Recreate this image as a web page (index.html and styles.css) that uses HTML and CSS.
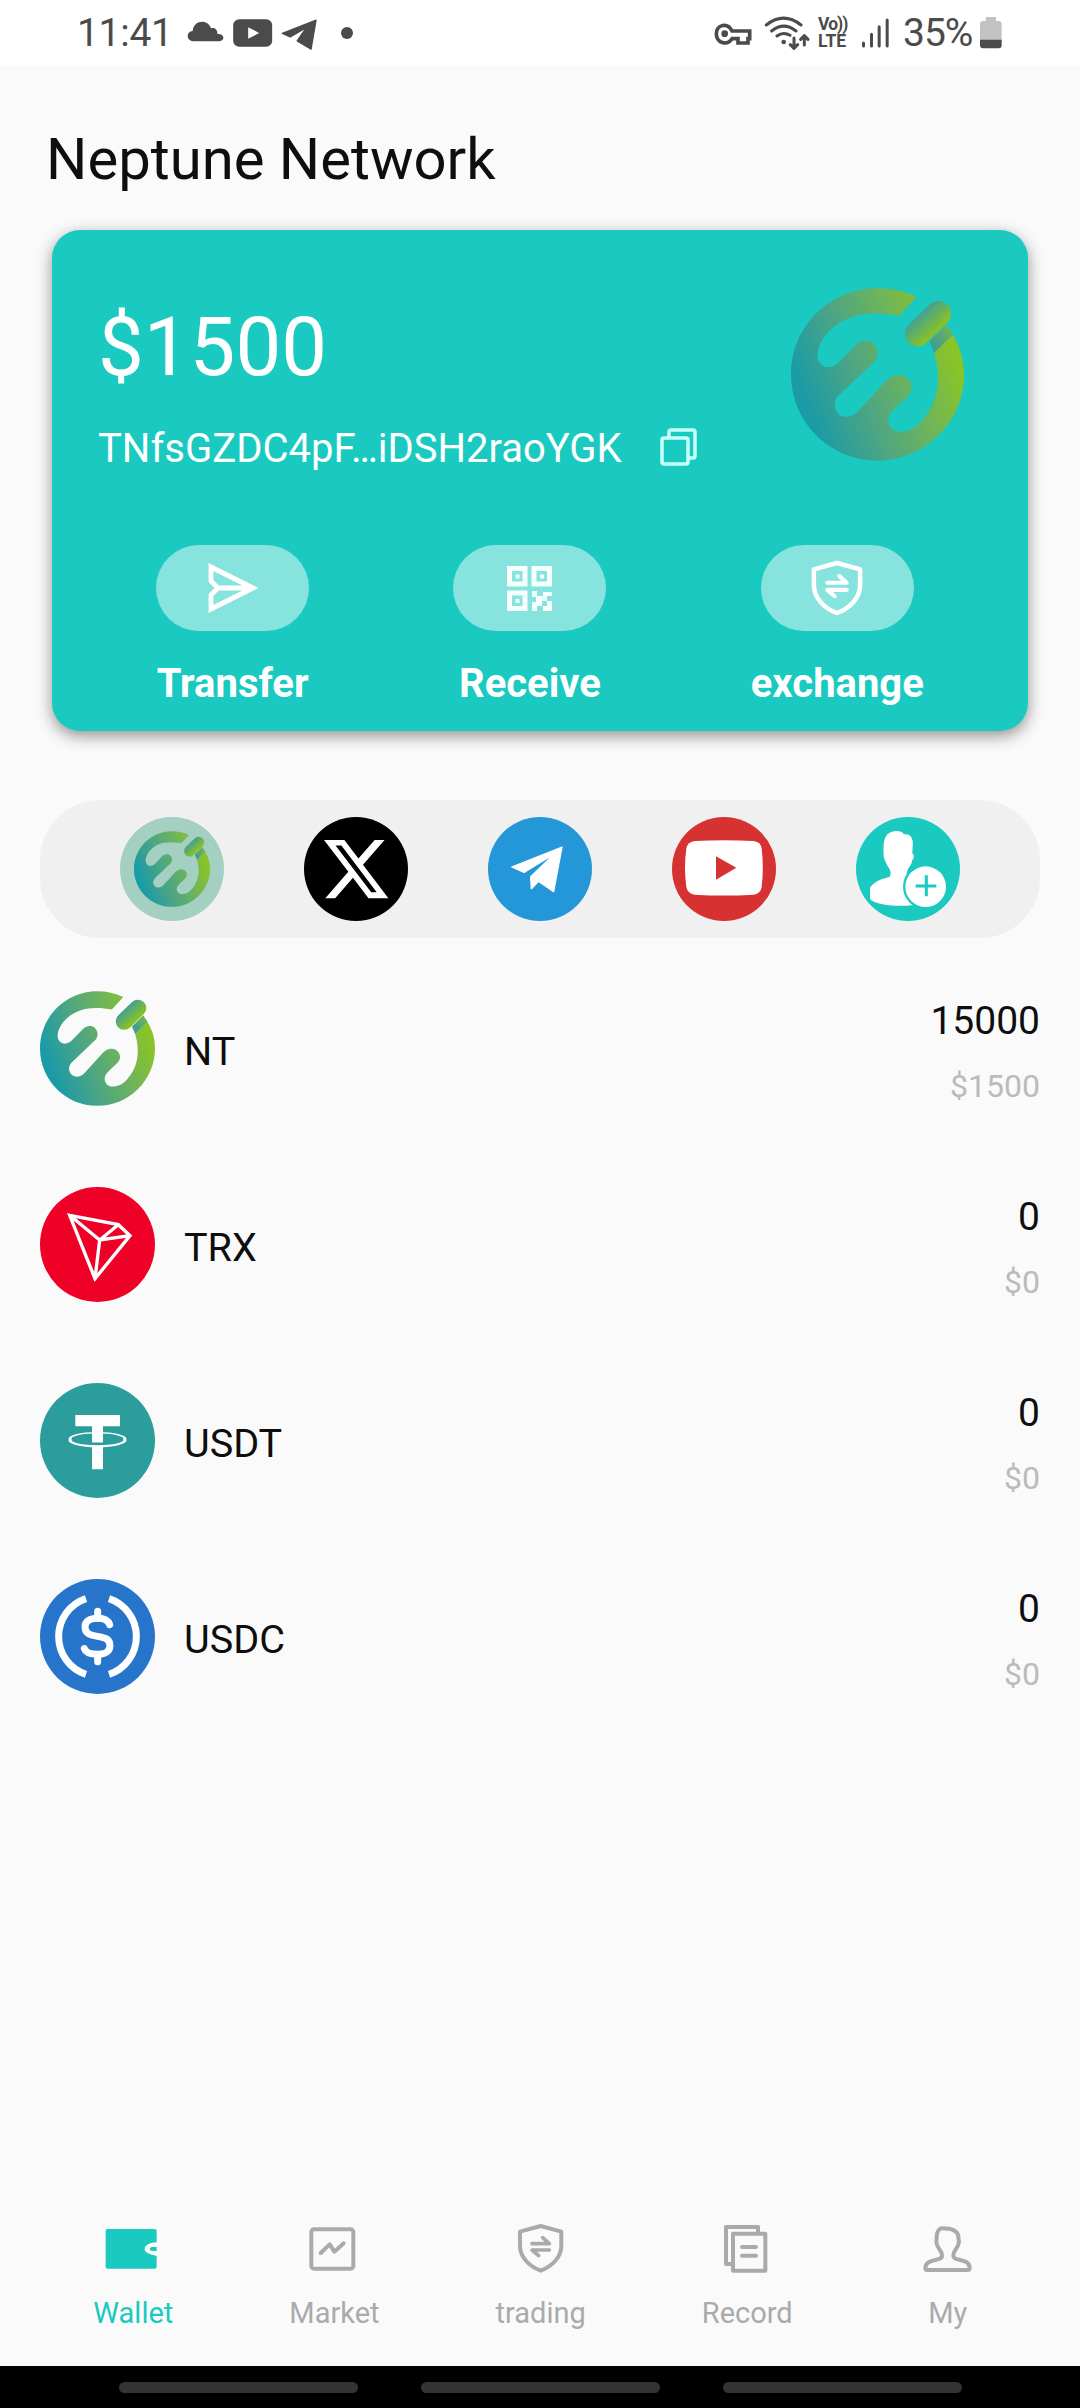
FILE: index.html
```html
<!DOCTYPE html>
<html lang="en">
<head>
<meta charset="utf-8">
<title>Neptune Network</title>
<link rel="stylesheet" href="styles.css">
</head>
<body>
<svg class="defs" aria-hidden="true">
  <defs>
    <linearGradient id="ring" gradientUnits="userSpaceOnUse" x1="110" y1="400" x2="550" y2="240">
      <stop offset="0" stop-color="#1b9ba6"/><stop offset=".35" stop-color="#4ca584"/><stop offset=".7" stop-color="#70b55a"/><stop offset="1" stop-color="#8ac426"/>
    </linearGradient>
    <linearGradient id="plug" gradientUnits="userSpaceOnUse" x1="445" y1="130" x2="500" y2="188">
      <stop offset="0" stop-color="#3f9f98"/><stop offset=".9" stop-color="#86c02b"/>
    </linearGradient>
    <linearGradient id="neck" gradientUnits="userSpaceOnUse" x1="490" y1="220" x2="550" y2="180">
      <stop offset="0" stop-color="#3f9f90"/><stop offset="1" stop-color="#77b54c"/>
    </linearGradient>
    <symbol id="logo" viewBox="63 54 519 517">
      <path fill="url(#ring)" d="M439 80C402 62 364 54 322 54C179 54 63 170 63 312C63 455 179 571 322 571C465 571 582 455 582 312C582 269 570 229 548 193L492 246C510 305 512 373 472 431C452 460 430 484 392 484C362 484 348 456 358 434C366 419 398 392 413 377C430 360 427 334 409 321C389 308 365 314 348 331L263 424C247 441 220 446 204 429C190 413 191 390 207 374L309 278C326 262 328 238 311 220C296 206 273 209 257 224L205 278C189 294 165 295 151 280C138 265 142 244 149 226C166 181 214 145 266 134C309 126 350 129 387 137Z"/>
      <path fill="url(#neck)" d="M478 213L529 163L549 193L492 247Z"/>
      <path stroke="url(#plug)" stroke-width="76" stroke-linecap="round" d="M443 190L505 130"/>
    </symbol>
    <symbol id="shield" viewBox="-13 70 144 150">
      <path fill="none" stroke="currentColor" stroke-width="12" stroke-linejoin="round" d="M59 78L121 95V137C121 171 94 199 59 212C24 199-3 171-3 137V95Z"/>
      <path fill="none" stroke="currentColor" stroke-width="11" stroke-linecap="round" stroke-linejoin="round" d="M33 131H85L65 113M85 150H33L53 167"/>
    </symbol>
  </defs>
</svg>

<header class="status">
  <div class="status-side">
    <span class="clock">11:41</span>
    <svg class="s-cloud" viewBox="380 40 112 120"><path fill="#4b4b4b" d="M399 122C376 120 378 92 397 91C400 58 442 53 453 83C466 79 473 90 472 100C494 98 497 122 476 122Z"/></svg>
    <svg class="s-tube" viewBox="516 40 122 120"><rect x="519" y="56" width="117" height="82" rx="18" fill="#4b4b4b"/><path fill="#fff" d="M564 80L597 97L564 114Z"/></svg>
    <svg class="s-plane" viewBox="663 40 112 120"><path fill="#4b4b4b" stroke="#4b4b4b" stroke-width="4" stroke-linejoin="round" d="M667 98L769 58L754 146L712 121L740 80L691 109Z"/></svg>
    <span class="s-dot"></span>
  </div>
  <div class="status-side">
    <svg class="s-key" viewBox="42 40 114 120"><path fill="none" stroke="#4b4b4b" stroke-width="11" d="M96 91H149V114H144V127H114V114H96C80 138 49 125 49 99C49 73 83 63 96 91Z"/><circle cx="74" cy="99" r="10" fill="#4b4b4b"/></svg>
    <svg class="s-wifi" viewBox="192 40 138 120"><g fill="none" stroke="#4b4b4b" stroke-width="9" stroke-linecap="round" stroke-linejoin="round"><path d="M199 73Q251 32 303 73M215 91Q251 62 288 91M231 106Q250 92 270 104M282 112V142M271 132L282 143L293 132M313 133V107M302 116L313 105L324 116"/></g><circle cx="251" cy="124" r="7" fill="#4b4b4b"/></svg>
    <div class="volte"><span class="vo">Vo))</span><span>LTE</span></div>
    <svg class="s-signal" viewBox="484 40 86 120"><path stroke="#4b4b4b" stroke-width="9" stroke-linecap="round" d="M491 127V136M515 101V136M538 78V136M562 58V136"/></svg>
    <span class="battery-text">35%</span>
    <svg class="s-battery" viewBox="845 40 66 120"><path fill="#c2c2c2" d="M862 52Q862 49 865 49H890Q893 49 893 52V61H901Q910 61 910 70V118H845V70Q845 61 854 61H862Z"/><path fill="#4b4b4b" d="M845 117H910V134Q910 143 901 143H854Q845 143 845 134Z"/></svg>
  </div>
</header>

<main class="page">
  <h1 class="title">Neptune Network</h1>

  <section class="card">
    <div class="card-top">
      <div>
        <div class="balance">$1500</div>
        <div class="address">
          <span>TNfsGZDC4pF…iDSH2raoYGK</span>
          <svg class="copy" viewBox="0 0 38 38"><g fill="none" stroke="#c9fffa" stroke-width="3.500" stroke-linejoin="round"><rect x="2" y="10" width="26" height="26" rx="2"/><path d="M9 10V4Q9 2 11 2H33Q35 2 35 4V28Q35 30 33 30H28"/></g></svg>
        </div>
      </div>
      <svg class="card-logo"><use href="#logo"/></svg>
    </div>
    <div class="actions">
      <div class="action">
        <span class="pill"><svg class="i-send" viewBox="0 0 50 52"><path fill="none" stroke="#fff" stroke-width="4.800" stroke-linejoin="miter" d="M3 5L45 26L3 47V33L10 26L3 19ZM10 26H43"/></svg></span>
        <span class="action-label">Transfer</span>
      </div>
      <div class="action">
        <span class="pill"><svg class="i-qr" viewBox="0 0 45 45"><g fill="none" stroke="#f4fffe" stroke-width="5"><path d="M2.500 2.500H18V18H2.500ZM27 2.500H42.500V18H27ZM2.500 27H18V42.500H2.500Z"/></g><path fill="#f4fffe" d="M8.500 8.500h4v4h-4ZM33 8.500h4v4h-4ZM8.500 33h4v4h-4ZM25 25h5v5h6v-4h9v4h-5v5h-5v5h-5v5h-5v-9h4v-5h-4ZM40 35h5v10h-9v-5h4Z"/></svg></span>
        <span class="action-label">Receive</span>
      </div>
      <div class="action">
        <span class="pill"><svg class="i-shield"><use href="#shield"/></svg></span>
        <span class="action-label">exchange</span>
      </div>
    </div>
  </section>

  <nav class="socials">
    <a class="social site"><svg class="site-logo"><use href="#logo"/></svg></a>
    <a class="social x"><svg viewBox="822 80 312 312"><path fill="#fff" transform="translate(870.8 128.900) scale(8.950)" d="M18.244 2.250h3.308l-7.227 8.260 8.502 11.240H16.170l-5.214-6.817L4.990 21.750H1.680l7.730-8.835L1.254 2.250H8.080l4.713 6.231zm-1.161 17.520h1.833L7.084 4.126H5.117z"/></svg></a>
    <a class="social telegram"><svg viewBox="-126 80 312 312"><path fill="#fff" stroke="#fff" stroke-width="4" stroke-linejoin="round" d="M-55 230L96 170L71 304L26 273L4 295L2 259L73 191L-18 246Z"/></svg></a>
    <a class="social youtube"><svg viewBox="426 80 312 312"><path fill="#fff" d="M495 152Q582 147 670 152Q692 154 695 175Q702 232 695 290Q692 311 670 313Q582 318 495 313Q473 311 469 290Q461 232 469 175Q473 154 495 152Z"/><path fill="#d63232" d="M558 198L619 232L558 268Z"/></svg></a>
    <a class="social invite"><svg viewBox="978 80 312 312"><path fill="#fff" d="M1099 122C1112 122 1119 126 1122 132C1144 128 1151 148 1148 170L1147 190C1155 192 1151 207 1146 211C1145 224 1137 228 1133 239C1128 250 1128 262 1145 268L1160 344C1110 349 1040 347 1020 326V292C1034 272 1057 265 1078 260C1087 248 1079 236 1071 224C1067 212 1059 204 1061 192C1060 165 1058 122 1099 122Z"/><circle cx="1187" cy="289" r="68" fill="#1ac9bf"/><circle cx="1187" cy="289" r="61" fill="#fff"/><path stroke="#1ac9bf" stroke-width="9" d="M1157 287H1219M1189 255V318"/></svg></a>
  </nav>

  <section class="tokens">
    <div class="token">
      <svg class="coin"><use href="#logo"/></svg>
      <span class="symbol">NT</span>
      <div class="amounts"><span class="amount">15000</span><span class="value">$1500</span></div>
    </div>
    <div class="token">
      <svg class="coin" viewBox="30 651 345 345"><circle cx="202.500" cy="823.500" r="172.500" fill="#ef0027"/><path fill="none" stroke="#fff" stroke-width="10" d="M119 736L265 764L300 797L195 926ZM119 736L209 810L300 797M265 764L209 810L195 926"/></svg>
      <span class="symbol">TRX</span>
      <div class="amounts"><span class="amount">0</span><span class="value">$0</span></div>
    </div>
    <div class="token">
      <svg class="coin" viewBox="30 69 345 345"><circle cx="202.500" cy="241.500" r="172.500" fill="#2a9d9c"/><path fill="#fff" d="M136 165H270V199H219V247H186V199H136ZM186 258H219V328H186Z"/><path fill="#fff" fill-rule="evenodd" d="M116 239A87 21 0 1 0 289 239A87 21 0 1 0 116 239ZM125 238A78 16 0 1 0 280 238A78 16 0 1 0 125 238Z"/><path fill="#fff" d="M186 205H219V247H186Z"/></svg>
      <span class="symbol">USDT</span>
      <div class="amounts"><span class="amount">0</span><span class="value">$0</span></div>
    </div>
    <div class="token">
      <svg class="coin" viewBox="30 657 345 345"><circle cx="202.500" cy="829.500" r="172.500" fill="#2775ca"/><g fill="none" stroke="#fff" stroke-width="21"><path d="M168 716A119.500 119.500 0 0 0 168 943M237 716A119.500 119.500 0 0 1 237 943"/><path stroke-linecap="round" d="M203 754V775M203 884V905"/><path stroke-linecap="round" d="M239 794C234 778 221 775 203 775C180 775 165 784 165 801C165 845 240 813 240 857C240 874 225 883 203 883C182 883 167 878 163 866"/></g></svg>
      <span class="symbol">USDC</span>
      <div class="amounts"><span class="amount">0</span><span class="value">$0</span></div>
    </div>
  </section>
</main>

<nav class="tabs">
  <a class="tab active"><svg viewBox="103 54 234 180"><path fill="#1ac9bf" d="M144 87H285Q291 87 291 93V127C270 127 255 136 255 147C255 158 270 163 291 168V200Q291 206 285 206H144Q138 206 138 200V93Q138 87 144 87Z"/><path fill="#1ac9bf" d="M278 141H291V153H278Q270 153 270 147Q270 141 278 141Z"/></svg><span>Wallet</span></a>
  <a class="tab"><svg viewBox="706 54 234 180"><g fill="none" stroke="#aaa" stroke-width="12" stroke-linejoin="round" stroke-linecap="round"><rect x="755" y="88" width="126" height="118" rx="8"/><path d="M783 159L810 133L824 155L852 130"/></g></svg><span>Market</span></a>
  <a class="tab"><svg viewBox="-57 54 234 180"><use href="#shield" x="-13" y="70" width="144" height="150"/></svg><span>trading</span></a>
  <a class="tab"><svg viewBox="567 54 234 180"><g fill="none" stroke="#aaa" stroke-width="12" stroke-linejoin="round" stroke-linecap="round"><path d="M717 96V81H621V192H637"/><rect x="642" y="101" width="97" height="111"/><path d="M669 141H711M669 167H711"/></g></svg><span>Record</span></a>
  <a class="tab"><svg viewBox="1167 54 234 180"><path fill="none" stroke="#aaa" stroke-width="12" stroke-linejoin="round" d="M1262 85C1296 84 1316 93 1315 112L1317 126C1315 146 1299 151 1300 166C1299 187 1350 172 1349 205Q1349 210 1343 210H1222Q1216 210 1216 205C1216 172 1268 187 1266 166C1267 151 1250 146 1249 126L1250 112C1250 99 1254 90 1262 85Z"/></svg><span>My</span></a>
</nav>

<footer class="sysnav"><i></i><i></i><i></i></footer>
</body>
</html>
```
FILE: styles.css
```css
* { box-sizing: border-box; }

body {
  margin: 0;
  width: 1080px;
  height: 2408px;
  display: flex;
  flex-direction: column;
  background: #fafafa;
  color: #0e0e0e;
  font-family: Roboto, "Liberation Sans", sans-serif;
}

svg { display: block; flex: none; }
.defs { width: 0; height: 0; position: absolute; }

/* Status bar */
.status {
  flex: none;
  height: 65px;
  padding: 0 78px 0 77px;
  display: flex;
  justify-content: space-between;
  background: #fff;
  color: #4b4b4b;
}
.status-side { display: flex; align-items: center; height: 65px; }
.status-side svg { height: 40px; margin-top: 2px; }
.clock { width: 95px; font-size: 39px; letter-spacing: -0.3px; }
.s-cloud { width: 37px; margin-left: 15px; }
.s-tube { width: 41px; margin-left: 8px; }
.s-plane { width: 37px; margin-left: 8px; }
.s-dot { width: 12px; height: 12px; margin-left: 23px; border-radius: 50%; background: #4b4b4b; }
.s-key { width: 38px; }
.s-wifi { width: 46px; margin-left: 12px; }
.volte {
  width: 31px;
  margin: 1px 0 0 8px;
  display: flex;
  flex-direction: column;
  font-size: 17.5px;
  line-height: 17px;
  font-weight: 700;
  white-space: nowrap;
}
.vo { letter-spacing: -0.9px; }
.s-signal { width: 29px; margin-left: 12px; }
.battery-text { width: 71px; margin: 0 6px 0 13px; font-size: 39px; letter-spacing: -1px; }
.s-battery { width: 22px; }

/* Page */
.page { flex: 1; padding: 0 40px; }
.title {
  margin: 60px 0 36px;
  padding-left: 6px;
  font-size: 58px;
  line-height: 69px;
  font-weight: 400;
}

/* Balance card */
.card {
  height: 501px;
  margin: 0 12px;
  padding: 58px 32px 0;
  border-radius: 28px;
  background: #1ac9bf;
  box-shadow: 0 5px 16px rgba(0, 0, 0, .42);
  color: #fff;
}
.card-top {
  display: flex;
  justify-content: space-between;
  height: 257px;
  padding: 0 32px 0 14px;
}
.balance { margin-top: 11px; font-size: 81.5px; line-height: 96px; }
.address {
  display: flex;
  align-items: center;
  gap: 38px;
  margin-top: 30px;
  font-size: 40px;
  line-height: 48px;
}
.copy { width: 38px; height: 38px; margin-bottom: 4px; }
.card-logo { width: 173px; height: 173px; }
.actions { display: flex; justify-content: space-around; }
.action { display: flex; flex-direction: column; align-items: center; }
.pill {
  width: 153px;
  height: 86px;
  display: flex;
  align-items: center;
  justify-content: center;
  border-radius: 43px;
  background: rgba(255, 255, 255, .48);
}
.action-label { margin-top: 29px; font-size: 40px; line-height: 48px; font-weight: 700; }
.i-send { width: 50px; height: 52px; }
.i-qr { width: 45px; height: 45px; }
.i-shield { width: 54px; height: 56px; }

/* Social links */
.socials {
  height: 138px;
  margin-top: 69px;
  display: flex;
  align-items: center;
  justify-content: space-evenly;
  border-radius: 60px;
  background: #f0f0f0;
}
.social {
  width: 104px;
  height: 104px;
  display: flex;
  align-items: center;
  justify-content: center;
  border-radius: 50%;
}
.social svg { width: 104px; height: 104px; }
.social .site-logo { width: 76px; height: 76px; }
.site { background: #a3d0c0; }
.x { background: #000; }
.telegram { background: #2397d8; }
.youtube { background: #d63232; }
.invite { background: #1ac9bf; }

/* Token list */
.tokens { margin-top: 53px; display: grid; gap: 81px; }
.token { height: 115px; display: flex; align-items: center; }
.coin { width: 115px; height: 115px; }
.symbol { margin: 6px 0 0 29px; font-size: 39.6px; line-height: 48px; }
.amounts {
  margin: 6px 0 0 auto;
  display: flex;
  flex-direction: column;
  align-items: flex-end;
  gap: 23px;
  font-size: 39px;
  line-height: 46px;
}
.value { font-size: 32px; line-height: 38px; color: #bbb; }

/* Tab bar */
.tabs {
  flex: none;
  height: 148px;
  display: flex;
  justify-content: center;
  gap: 116px;
  color: #aaa;
  font-size: 29px;
  line-height: 36px;
}
.tab { display: flex; flex-direction: column; align-items: center; gap: 17px; }
.tab svg { width: 78px; height: 60px; }
.active { color: #1ac9bf; }

/* System navigation */
.sysnav {
  flex: none;
  height: 42px;
  padding-top: 16px;
  display: flex;
  justify-content: center;
  gap: 63px;
  background: #000;
}
.sysnav i { width: 239px; height: 11px; border-radius: 6px; background: #333; }
```
